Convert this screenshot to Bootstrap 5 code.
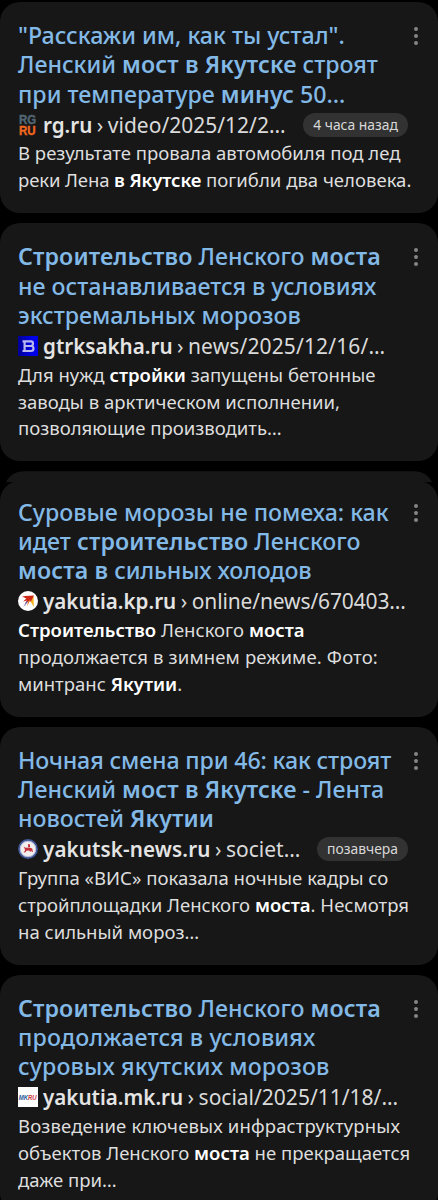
<!DOCTYPE html>
<html lang="ru">
<head>
<meta charset="utf-8">
<meta name="viewport" content="width=device-width, initial-scale=1">
<title>Результаты поиска</title>
<link href="https://cdn.jsdelivr.net/npm/bootstrap@5.3.0/dist/css/bootstrap.min.css" rel="stylesheet">
<style>
  html, body { background: #000; overflow: hidden; height: 1200px; }
  body { font-family: "Noto Sans", sans-serif; color: #dedede; }
  .results { padding-top: 2px; gap: 10px; }
  .result { background: #171717; border: 0; border-radius: 20px; padding: 19px 18px 19px; color: inherit; flex-shrink: 0; }
  .result-title { font-size: 23.2px; line-height: 29.3px; font-weight: 500; color: #83b9e6; white-space: nowrap; text-decoration: none; }
  .result-title b { font-weight: 600; letter-spacing: .12px; }
  .source { height: 31.5px; }
  .favicon { width: 20px; height: 20px; margin-right: 5px; flex: none; }
  .path-text { font-size: 21px; line-height: 28px; white-space: pre; color: #dadada; }
  .path-text b { font-size: 20.6px; font-weight: 600; color: #e4e4e4; }
  .path-text i { font-style: normal; margin: 0 -1px; }
  .age { background: #323232; color: #d8d8d8; font-size: 13.9px; line-height: 24px; padding: 0 10px; border-radius: 12px; margin-right: 12px; font-weight: 400; }
  .snippet { font-size: 18.55px; line-height: 26.9px; white-space: nowrap; margin: 0; }
  .snippet b { font-weight: 600; color: #fff; }
  .dots { width: 6px; height: 20px; margin: 5px 1px 0 0; fill: #858585; }
  .tight { letter-spacing: -.13px; }
  .wide { letter-spacing: .13px; }
  /* rounded edge of a card hidden under the next one */
  .peek { background: #171717; height: 30px; margin-bottom: -30px; border-radius: 20px 20px 0 0; clip-path: inset(0 0 19px 0); flex-shrink: 0; }
  .stacked { padding-top: 16.3px; }
</style>
</head>
<body>
<main class="results d-flex flex-column">

  <article class="card result">
    <div class="d-flex justify-content-between">
      <a class="result-title">"Расскажи им, как ты устал".<br>Ленский <b>мост в Якутске</b> строят<br>при температуре <b>минус</b> 50…</a>
      <svg class="dots" viewBox="0 0 6 20"><circle cx="3" cy="3" r="2"/><circle cx="3" cy="10" r="2"/><circle cx="3" cy="17" r="2"/></svg>
    </div>
    <div class="source d-flex align-items-center">
      <svg class="favicon" viewBox="0 0 20 20" overflow="visible" font-family="Liberation Sans" font-weight="700" font-size="13.4" stroke-width=".4"><text transform="translate(.9 9.4) scale(.86 1)" fill="#526673" stroke="#526673">RG</text><text transform="translate(.9 19.6) scale(.86 1)" fill="#f2681f" stroke="#f2681f">RU</text></svg>
      <span class="path-text"><b>rg.ru</b><i> › </i>video/2025/12/2…</span>
      <span class="age ms-auto">4 часа назад</span>
    </div>
    <p class="snippet">В результате провала автомобиля под лед<br><span class="tight">реки Лена <b>в Якутске</b></span> погибли два человека.</p>
  </article>

  <article class="card result">
    <div class="d-flex justify-content-between">
      <a class="result-title"><b>Строительство</b> Ленского <b>моста</b><br>не останавливается в условиях<br>экстремальных морозов</a>
      <svg class="dots" viewBox="0 0 6 20"><circle cx="3" cy="3" r="2"/><circle cx="3" cy="10" r="2"/><circle cx="3" cy="17" r="2"/></svg>
    </div>
    <div class="source d-flex align-items-center">
      <svg class="favicon" viewBox="0 0 20 20"><defs><linearGradient id="blue"><stop stop-color="#000096"/><stop offset=".7" stop-color="#0000e8"/></linearGradient></defs><path fill="url(#blue)" d="M0 0h20v20H0z"/><path fill="none" stroke="#b8b8ee" stroke-width="2.2" d="M4.5 5.3H13Q15 5.3 15 7.6T13 10H7M13 10Q15.5 10 15.5 12.5T13 15H4.5M6.6 5v10"/></svg>
      <span class="path-text"><b>gtrksakha.ru</b><i> › </i><span class="wide">news/2025/12/16/…</span></span>
    </div>
    <p class="snippet">Для нужд <b>стройки</b> запущены бетонные<br>заводы в арктическом исполнении,<br>позволяющие производить…</p>
  </article>

  <div class="peek mx-1"></div>

  <article class="card result stacked">
    <div class="d-flex justify-content-between">
      <a class="result-title">Суровые морозы не помеха: как<br>идет <b>строительство</b> Ленского<br><b>моста в</b> <span class="tight">сильных холодов</span></a>
      <svg class="dots" viewBox="0 0 6 20"><circle cx="3" cy="3" r="2"/><circle cx="3" cy="10" r="2"/><circle cx="3" cy="17" r="2"/></svg>
    </div>
    <div class="source d-flex align-items-center">
      <svg class="favicon" viewBox="0 0 20 20"><circle cx="10" cy="10" r="10" fill="#fff"/><path fill="#f5b51d" d="M15.6 5l.2 11-3.2-5.5z"/><path fill="#cf2a18" d="M4 5.6L7 5l9-.4-3 6-1.4-.4-4.2 1.6 1.7-2.4-4 1 3.2-3z"/><path fill="#51409b" d="M10.6 9.8L5.4 16l2.6-5z"/><path fill="#e57925" d="M12.6 8.5L9 15.4l1-5.2z"/></svg>
      <span class="path-text"><b>yakutia.kp.ru</b><i> › </i><span class="tight">online/news/670403…</span></span>
    </div>
    <p class="snippet"><b>Строительство</b> Ленского <b>моста</b><br><span class="wide">продолжается в зимнем режиме. Фото:</span><br>минтранс <b>Якутии</b>.</p>
  </article>

  <article class="card result">
    <div class="d-flex justify-content-between">
      <a class="result-title"><span class="tight">Ночная смена при 46: как строят</span><br>Ленский <b>мост в Якутске</b> - Лента<br>новостей <b>Якутии</b></a>
      <svg class="dots" viewBox="0 0 6 20"><circle cx="3" cy="3" r="2"/><circle cx="3" cy="10" r="2"/><circle cx="3" cy="17" r="2"/></svg>
    </div>
    <div class="source d-flex align-items-center">
      <svg class="favicon" viewBox="0 0 20 20"><circle cx="10" cy="10" r="9" fill="#f2eeee" stroke="#43589b" stroke-width="1.8"/><circle cx="10" cy="10" r="7.8" fill="none" stroke="#a9b3d3" stroke-width=".8"/><path fill="#c3323c" d="M5.5 7.5l2 1.2 4-.2 2.7 1 .8 3.5-1.3-.2-.4-1.3-1 1.6-1.2-1.5-2.6.2-1.3 1.7-1.5-.2 1.4-1.7-.5-2.2zM10 5.2h2v2.8h-2z"/></svg>
      <span class="path-text"><b class="wide">yakutsk-news.ru</b><i> › </i>societ…</span>
      <span class="age ms-auto">позавчера</span>
    </div>
    <p class="snippet">Группа «ВИС» показала ночные кадры со<br>стройплощадки Ленского <b>моста</b>. Несмотря<br>на сильный мороз…</p>
  </article>

  <article class="card result">
    <div class="d-flex justify-content-between">
      <a class="result-title"><b>Строительство</b> Ленского <b>моста</b><br><span class="wide">продолжается в условиях</span><br><span class="wide">суровых якутских морозов</span></a>
      <svg class="dots" viewBox="0 0 6 20"><circle cx="3" cy="3" r="2"/><circle cx="3" cy="10" r="2"/><circle cx="3" cy="17" r="2"/></svg>
    </div>
    <div class="source d-flex align-items-center">
      <svg class="favicon" viewBox="0 0 20 20" font-family="Liberation Sans" font-weight="700" font-style="italic" font-size="7.6"><path fill="#fff" d="M0 0h20v20H0z"/><text transform="translate(.7 12.8) scale(.79 1)" fill="#27599b">MK<tspan fill="#cb3341">RU</tspan></text></svg>
      <span class="path-text"><b>yakutia.mk.ru</b><i> › </i>social/2025/11/18/…</span>
    </div>
    <p class="snippet"><span class="wide">Возведение ключевых инфраструктурных</span><br>объектов Ленского <b>моста</b> не прекращается<br>даже при…</p>
  </article>
</main>
<script src="https://cdn.jsdelivr.net/npm/bootstrap@5.3.0/dist/js/bootstrap.bundle.min.js"></script>
</body>
</html>
